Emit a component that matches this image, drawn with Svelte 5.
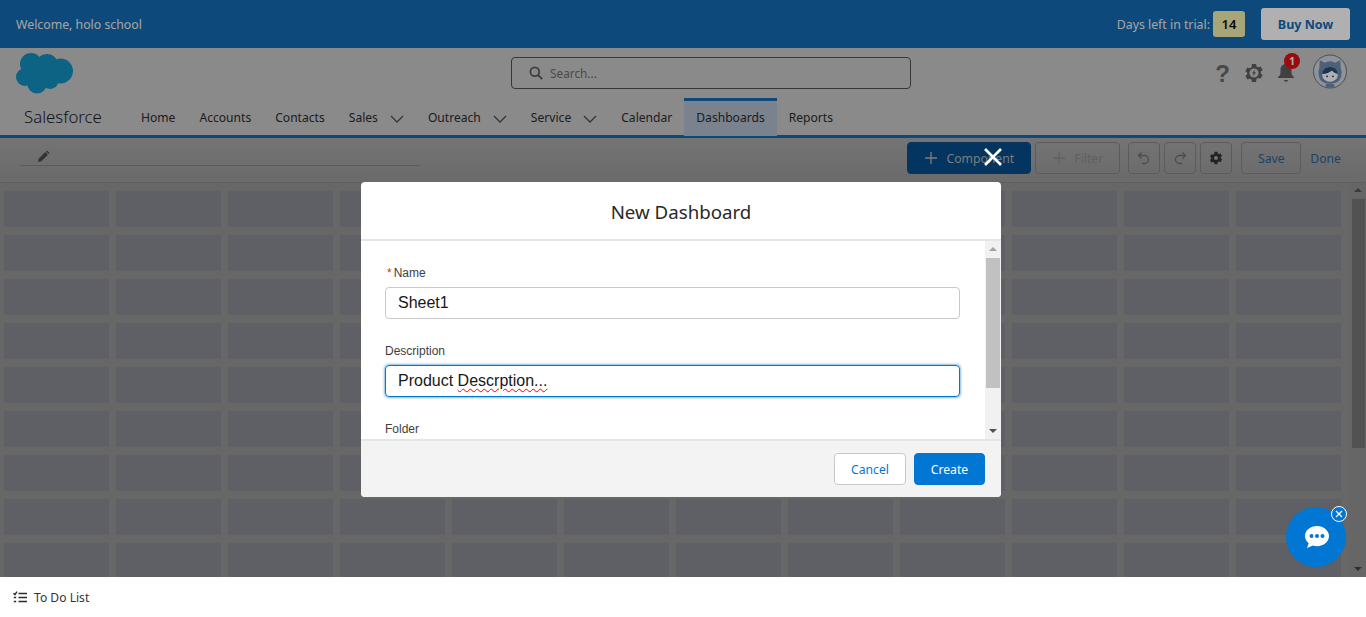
<script>
  const tabs = [
    { name: "Home" },
    { name: "Accounts" },
    { name: "Contacts" },
    { name: "Sales", menu: true },
    { name: "Outreach", menu: true },
    { name: "Service", menu: true },
    { name: "Calendar" },
    { name: "Dashboards", active: true },
    { name: "Reports" },
  ];
  const cells = Array.from({ length: 108 }, (_, i) => i);
</script>

<div class="page">
  <div class="main">
    <header class="trial">
      <span>Welcome, holo school</span>
      <div class="trial-right">
        <span>Days left in trial:</span>
        <b class="days">14</b>
        <button class="buy">Buy Now</button>
      </div>
    </header>

    <section class="brand">
      <div class="brand-top">
        <svg class="logo" width="58" height="41" viewBox="0 0 58 41">
          <g fill="#1390c0">
            <circle cx="15" cy="11" r="11" />
            <circle cx="31" cy="12" r="11" />
            <circle cx="44.500" cy="18" r="12.500" />
            <circle cx="9" cy="24" r="9" />
            <circle cx="21" cy="30.500" r="10" />
            <circle cx="34" cy="27" r="9" />
            <rect x="12" y="12" width="26" height="16" />
          </g>
        </svg>
        <div class="search">
          <svg width="14" height="14" viewBox="0 0 14 14" fill="none" stroke="#5b5b5b" stroke-width="1.800">
            <circle cx="5.800" cy="5.800" r="4.400" />
            <path d="M9 9l4.200 4.200" />
          </svg>
          <span>Search...</span>
        </div>
        <div class="tools">
          <span class="help">?</span>
          <svg width="20" height="20" viewBox="0 0 20 20">
            <path fill="#5f5f5f" fill-rule="evenodd" d="M8 1h4l.6 2.400 1.600.9 2.400-.7 2 3.400-1.800 1.700v1.800l1.800 1.700-2 3.400-2.400-.7-1.600.9L12 19H8l-.6-2.400-1.600-.9-2.400.7-2-3.400 1.800-1.700V9.700L1.400 8l2-3.400 2.400.7 1.600-.9zM10 5.500a4.500 4.500 0 1 0 0 9 4.500 4.500 0 0 0 0-9z" />
            <path fill="#5f5f5f" d="M10.800 6.500L8 10.500h1.700L9 13.500l3-4.200h-1.700z" />
          </svg>
          <div class="bell">
            <svg width="20" height="21" viewBox="0 0 20 21">
              <path fill="#5f5f5f" d="M10 2c-3.400 0-5.500 2.500-5.500 5.500v3.500c0 1.800-1.200 3-2.500 4v1h16v-1c-1.300-1-2.500-2.200-2.500-4V7.500C15.500 4.500 13.400 2 10 2zM7.800 18a2.300 2.300 0 0 0 4.400 0z" />
            </svg>
            <span class="badge">1</span>
          </div>
          <svg class="avatar" width="34" height="35" viewBox="0 0 35 35">
            <circle cx="17.500" cy="17.500" r="17" fill="#cfd5de" stroke="#6e6e6e" />
            <path fill="#6f8bb0" d="M7 6l5 2.500a11 11 0 0 1 11 0L28 6l.5 8a12 12 0 0 1 .5 8c-1 6-5 8-11.500 8S7 28 6 22a12 12 0 0 1 .5-8z" />
            <ellipse cx="17.500" cy="21" rx="8" ry="7" fill="#fff" />
            <path fill="#2c4a70" d="M9.500 20c.5-5 4-7 8-7s7.500 2 8 7c-2.500-.5-4.500-1.500-6-3.500-2 2-6 3.500-10 3.500z" />
            <circle cx="14.500" cy="22.500" r="1" fill="#1d3a5f" />
            <circle cx="20.500" cy="22.500" r="1" fill="#1d3a5f" />
            <rect x="13" y="30" width="9" height="4" rx="2" fill="#6f8bb0" />
          </svg>
        </div>
      </div>

      <nav class="tabs">
        <span class="app">Salesforce</span>
        {#each tabs as tab}
          <div class="tab" class:active={tab.active}>
            {tab.name}
            {#if tab.menu}
              <svg class="chev" width="14" height="8" viewBox="0 0 14 8" fill="none" stroke="#4d4d4d" stroke-width="1.300">
                <path d="M1 1l6 6 6-6" />
              </svg>
            {/if}
          </div>
        {/each}
      </nav>
    </section>

    <section class="toolbar">
      <div class="title-edit">
        <svg width="13" height="13" viewBox="0 0 13 13">
          <path fill="#4a4a4a" d="M1 12l.8-3.400 6.500-6.500 2.600 2.600-6.500 6.500zM9 1.400l1-1 2.600 2.600-1 1z" />
        </svg>
      </div>
      <div class="actions">
        <button class="tb primary">
          <svg width="14" height="14" viewBox="0 0 14 14" stroke="currentColor" stroke-width="1.300"><path d="M7 1v12M1 7h12" /></svg>
          Component
        </button>
        <button class="tb filter">
          <svg width="14" height="14" viewBox="0 0 14 14" stroke="currentColor" stroke-width="1.300"><path d="M7 1v12M1 7h12" /></svg>
          Filter
        </button>
        <div class="icon-group">
          <button class="tb square">
            <svg width="14" height="14" viewBox="0 0 14 14" fill="none" stroke="#6f6f6f" stroke-width="1.300">
              <path d="M4.500 1.500L1.500 4.500l3 3M1.500 4.500h6a4 4 0 0 1 0 8H5" />
            </svg>
          </button>
          <button class="tb square">
            <svg width="14" height="14" viewBox="0 0 14 14" fill="none" stroke="#6f6f6f" stroke-width="1.300">
              <path d="M9.500 1.500l3 3-3 3M12.500 4.500h-6a4 4 0 0 0 0 8H9" />
            </svg>
          </button>
          <button class="tb square">
            <svg width="14" height="14" viewBox="0 0 20 20">
              <path fill="#333" fill-rule="evenodd" d="M8 1h4l.6 2.400 1.600.9 2.400-.7 2 3.400-1.800 1.700v1.800l1.800 1.700-2 3.400-2.400-.7-1.600.9L12 19H8l-.6-2.400-1.600-.9-2.400.7-2-3.400 1.800-1.700V9.700L1.400 8l2-3.400 2.400.7 1.600-.9zM10 7a3 3 0 1 0 0 6 3 3 0 0 0 0-6z" />
            </svg>
          </button>
        </div>
        <button class="tb save">Save</button>
        <span class="done">Done</span>
      </div>
    </section>

    <section class="canvas">
      <div class="grid">
        {#each cells as c (c)}
          <div class="cell"></div>
        {/each}
      </div>
      <div class="pagebar">
        <i class="up"></i>
        <div class="pagethumb"></div>
        <i class="down"></i>
      </div>
    </section>
  </div>

  <footer class="todo">
    <svg width="14" height="12" viewBox="0 0 14 12" fill="none" stroke="#2b2b2b" stroke-width="1.400">
      <path d="M.5 2.200l1.400 1.400L4 .6M5.500 2.500H14M5.500 6.500H14M5.500 10.500H14M.8 6.500h2.400M.8 10.500h2.400" />
    </svg>
    To Do List
  </footer>

  <div class="overlay">
    <svg class="close" width="20" height="20" viewBox="0 0 20 20" stroke="#fff" stroke-width="2.600">
      <path d="M2 2l16 16M18 2L2 18" />
    </svg>
    <div class="modal">
      <h2>New Dashboard</h2>
      <div class="modal-body">
        <div class="form">
          <label for="name"><em>*</em>Name</label>
          <div id="name" class="field">Sheet1</div>
          <label for="desc">Description</label>
          <div id="desc" class="field focus">Product <span class="typo">Descrption...</span></div>
          <label for="folder">Folder</label>
        </div>
        <div class="modalbar">
          <i class="up"></i>
          <div class="modalthumb"></div>
          <i class="down"></i>
        </div>
      </div>
      <div class="modal-foot">
        <button class="cancel">Cancel</button>
        <button class="create">Create</button>
      </div>
    </div>
  </div>

  <div class="chat">
    <svg class="bubble" width="26" height="24" viewBox="0 0 26 24">
      <path fill="#fff" d="M13 1C6.400 1 1 5.400 1 11c0 2.900 1.400 5.400 3.700 7.200L3 23l5.800-2.400c1.300.4 2.700.6 4.200.6 6.600 0 12-4.500 12-10.100S19.600 1 13 1z" />
      <circle cx="7.500" cy="11" r="2" fill="#0176d3" />
      <circle cx="13" cy="11" r="2" fill="#0176d3" />
      <circle cx="18.500" cy="11" r="2" fill="#0176d3" />
    </svg>
    <span class="chat-x">
      <svg width="8" height="8" viewBox="0 0 8 8" stroke="#fff" stroke-width="1.200"><path d="M1 1l6 6M7 1L1 7" /></svg>
    </span>
  </div>
</div>

<style>
  :global(body) {
    margin: 0;
    overflow: hidden;
    font-family: "Noto Sans", "Open Sans", sans-serif;
  }
  .page {
    position: relative;
    display: flex;
    flex-direction: column;
    height: 617px;
    overflow: hidden;
    background: #fff;
  }
  .main {
    flex: 1;
    display: flex;
    flex-direction: column;
    min-height: 0;
  }
  button {
    font-family: inherit;
    cursor: pointer;
  }

  .trial {
    flex: none;
    height: 48px;
    display: flex;
    align-items: center;
    justify-content: space-between;
    padding: 0 16px;
    background: #136bb1;
    color: #eee;
    font-size: 12.300px;
  }
  .trial-right {
    display: flex;
    align-items: center;
  }
  .days {
    width: 32px;
    height: 26px;
    margin: 0 16px 0 3px;
    display: grid;
    place-items: center;
    background: #f3efae;
    border-radius: 3px;
    color: #111;
    font-size: 13px;
    font-weight: 600;
  }
  .buy {
    width: 89px;
    height: 32px;
    border: 0;
    border-radius: 3px;
    background: #fff;
    color: #136bb1;
    font-size: 12.500px;
    font-weight: 700;
  }

  .brand {
    flex: none;
    height: 87px;
    display: flex;
    flex-direction: column;
    background: #c8c8c8;
    border-bottom: 3px solid #136bb1;
    box-sizing: content-box;
  }
  .brand-top {
    position: relative;
    flex: none;
    height: 50px;
    display: flex;
    align-items: flex-start;
    padding: 5px 19px 0 16px;
    box-sizing: border-box;
  }
  .logo {
    flex: none;
  }
  .search {
    width: 400px;
    height: 32px;
    margin: 4px 0 0 437px;
    display: flex;
    align-items: center;
    gap: 7px;
    padding-left: 17px;
    box-sizing: border-box;
    border: 1px solid #505050;
    border-radius: 4px;
    color: #6c6c6c;
    font-size: 11.800px;
  }
  .tools {
    margin-left: auto;
    display: flex;
    align-items: center;
    gap: 12px;
    height: 36px;
  }
  .help {
    font-family: "Liberation Sans", sans-serif;
    font-size: 24px;
    font-weight: 700;
    color: #6a6a6a;
    margin: 5px 2px 0 0;
  }
  .tools > svg {
    margin-top: 3px;
  }
  .tools > .avatar {
    margin: 0 0 0 5px;
  }
  .bell {
    position: relative;
    margin-top: 3px;
    height: 21px;
  }
  .badge {
    position: absolute;
    top: -9px;
    left: 8px;
    width: 16px;
    height: 16px;
    display: grid;
    place-items: center;
    border-radius: 50%;
    background: #df1111;
    color: #fff;
    font-size: 10px;
    font-weight: 700;
  }

  .tabs {
    flex: 1;
    display: flex;
    align-items: stretch;
    padding-left: 24px;
    font-size: 12.100px;
    color: #2b2b2b;
  }
  .app {
    width: 105px;
    font-size: 16.800px;
    font-weight: 300;
    line-height: 38px;
    color: #222;
  }
  .tab {
    display: flex;
    align-items: center;
    gap: 12px;
    padding: 0 12px 2px;
    box-sizing: border-box;
    border-top: 3px solid transparent;
  }
  .tab.active {
    background: #b1bdcc;
    border-top-color: #136bb1;
  }
  .chev {
    margin-top: 3px;
  }

  .toolbar {
    flex: none;
    height: 45px;
    display: flex;
    justify-content: space-between;
    box-sizing: border-box;
    background: linear-gradient(#a8a8a8, #9a9a9a);
    border-bottom: 1px solid #8a8a8a;
    padding: 4px 25px 0 20px;
  }
  .title-edit {
    width: 400px;
    height: 24px;
    padding: 6px 0 0 17px;
    box-sizing: border-box;
    display: flex;
    align-items: center;
    border-bottom: 1px solid #858585;
  }
  .actions {
    display: flex;
    align-items: flex-start;
  }
  .tb {
    height: 32px;
    display: flex;
    align-items: center;
    justify-content: center;
    gap: 8px;
    padding: 0;
    background: transparent;
    border: 1px solid #868686;
    border-radius: 4px;
    font-size: 12.200px;
    color: #8c8c8c;
  }
  .primary {
    width: 124px;
    background: #054d8b;
    border-color: #054d8b;
    color: #b4b4b4;
  }
  .filter {
    width: 85px;
    margin-left: 4px;
  }
  .icon-group {
    display: flex;
    gap: 4px;
    margin-left: 8px;
  }
  .square {
    width: 32px;
  }
  .save {
    width: 60px;
    margin-left: 9px;
    color: #2e5f99;
  }
  .done {
    margin-left: 9px;
    line-height: 33px;
    font-size: 12.200px;
    color: #2e5f99;
  }

  .canvas {
    flex: 1;
    min-height: 0;
    display: flex;
    background: #959595;
  }
  .grid {
    flex: 1;
    min-width: 0;
    display: grid;
    grid-template-columns: repeat(12, 104.500px);
    grid-auto-rows: 36px;
    gap: 8px 7.500px;
    padding: 8px 0 0 4.400px;
    overflow: hidden;
  }
  .cell {
    background: #888c93;
  }
  .pagebar,
  .modalbar {
    flex: none;
    width: 16px;
    display: flex;
    flex-direction: column;
    align-items: center;
  }
  .pagebar {
    background: #949494;
    padding-top: 5px;
    box-sizing: border-box;
  }
  .pagethumb {
    width: 13px;
    height: 249px;
    margin-top: 7px;
    background: #777;
  }
  .up,
  .down {
    width: 0;
    height: 0;
    border: 4px solid transparent;
    border-top: 0;
    border-bottom: 4px solid #555;
  }
  .down {
    margin-top: auto;
    margin-bottom: 6px;
    border-bottom: 0;
    border-top: 4px solid #444;
  }

  .todo {
    flex: none;
    position: relative;
    z-index: 2;
    height: 40px;
    display: flex;
    align-items: center;
    gap: 7px;
    padding-left: 13px;
    background: #fff;
    color: #333;
    font-size: 12.100px;
  }

  .overlay {
    position: absolute;
    inset: 0;
    z-index: 1;
    background: rgba(0, 0, 0, 0.31);
    padding: 182px 0 0 361px;
    box-sizing: border-box;
  }
  .close {
    position: absolute;
    top: 147px;
    left: 983px;
    z-index: 1;
  }
  .modal {
    width: 640px;
    height: 315px;
    display: flex;
    flex-direction: column;
    background: #fff;
    border-radius: 4px;
    overflow: hidden;
  }
  .modal h2 {
    flex: none;
    height: 59px;
    margin: 0;
    box-sizing: border-box;
    border-bottom: 2px solid #e5e5e5;
    text-align: center;
    font-size: 18.700px;
    font-weight: 400;
    line-height: 60px;
    color: #2b2826;
  }
  .modal-body {
    flex: 1;
    min-height: 0;
    display: flex;
    overflow: hidden;
  }
  .form {
    flex: 1;
    padding: 24px 25px 0 24px;
    font-family: "Liberation Sans", sans-serif;
  }
  .form label {
    display: block;
    height: 22px;
    font-size: 12px;
    line-height: 16px;
    color: #3e3e3c;
  }
  .form em {
    font-style: normal;
    color: #c23934;
    margin: 0 2px;
  }
  .field {
    height: 32px;
    margin-bottom: 24px;
    padding-left: 12px;
    box-sizing: border-box;
    border: 1px solid #c9c9c9;
    border-radius: 4px;
    font-size: 16px;
    line-height: 29px;
    color: #181818;
  }
  .field.focus {
    border-color: #0176d3;
    box-shadow: 0 0 3px #0176d3;
  }
  .typo {
    text-decoration: underline wavy #ff0000 1px;
    text-underline-offset: 2px;
  }
  .modalbar {
    background: #f1f1f1;
    padding-top: 6px;
    box-sizing: border-box;
  }
  .modalbar .up {
    border-bottom-color: #a3a3a3;
  }
  .modalthumb {
    width: 14px;
    height: 130px;
    margin-top: 7px;
    background: #c1c1c1;
  }
  .modalbar .down {
    border-top-color: #505050;
  }
  .modal-foot {
    flex: none;
    height: 58px;
    display: flex;
    justify-content: flex-end;
    align-items: flex-start;
    gap: 8px;
    padding: 12px 16px 0;
    box-sizing: border-box;
    background: #f3f3f3;
    border-top: 2px solid #e5e5e5;
  }
  .cancel,
  .create {
    height: 32px;
    border-radius: 4px;
    font-size: 12.200px;
    padding: 0;
  }
  .cancel {
    width: 72px;
    background: #fff;
    border: 1px solid #c9c9c9;
    color: #0176d3;
  }
  .create {
    width: 71px;
    background: #0176d3;
    border: 1px solid #0176d3;
    color: #fff;
  }

  .chat {
    position: absolute;
    z-index: 3;
    top: 507px;
    left: 1286px;
    width: 60px;
    height: 60px;
    display: grid;
    place-items: center;
    border-radius: 50%;
    background: #0176d3;
  }
  .bubble {
    margin-left: 2px;
  }
  .chat-x {
    position: absolute;
    top: -1px;
    right: -1px;
    width: 14px;
    height: 14px;
    display: grid;
    place-items: center;
    background: #0176d3;
    border: 1px solid #fff;
    border-radius: 50%;
  }
</style>
